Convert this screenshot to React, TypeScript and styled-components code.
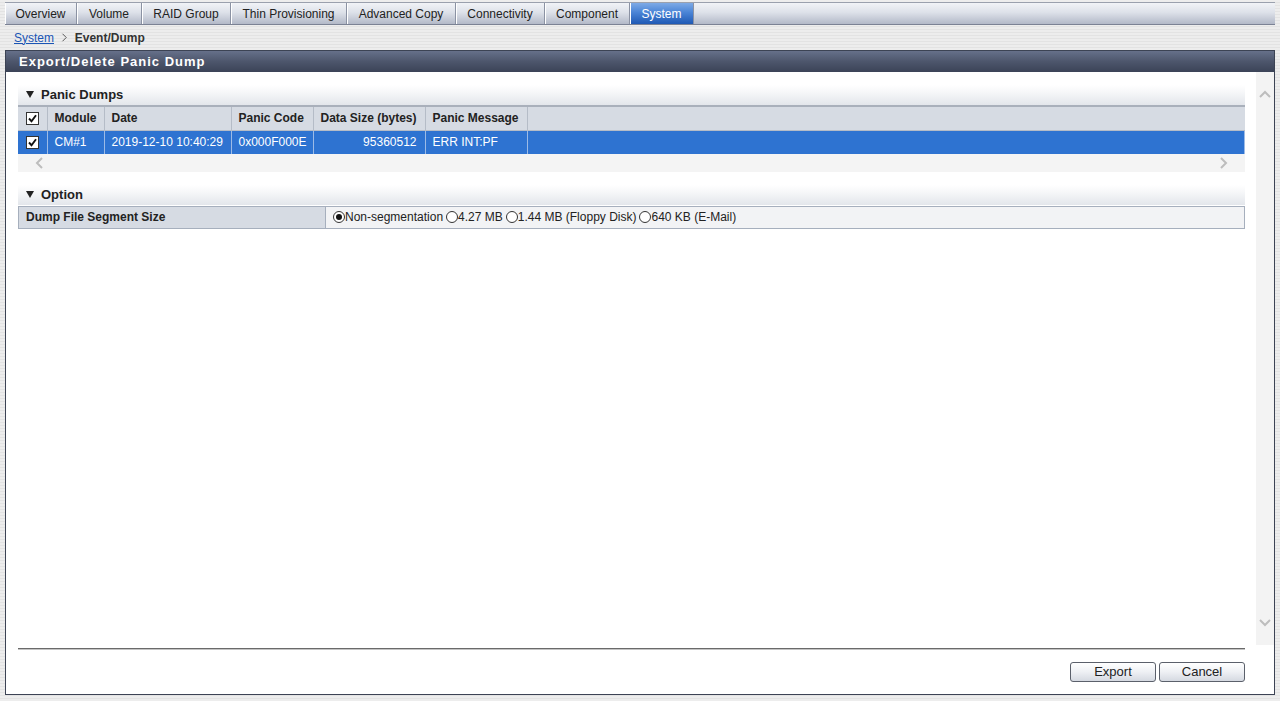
import React from "react";
import styled, { createGlobalStyle } from "styled-components";

const Global = createGlobalStyle`
  html, body { margin: 0; padding: 0; }
  body {
    font-family: "Liberation Sans", Arial, sans-serif;
    font-size: 12px;
    color: #222;
    background: repeating-linear-gradient(#ededed 0 2px, #e3e3e3 2px 3px);
  }
`;

const Page = styled.div`
  height: 701px;
  display: flex;
  flex-direction: column;
  box-sizing: border-box;
  padding: 2px 5px 6px 5px;
`;

const TabBar = styled.div`
  display: flex;
  height: 21px;
  border-top: 1px solid #9aa0ad;
  border-bottom: 1px solid #7b8294;
  background: linear-gradient(#f1f3f7 0%, #dde1e9 45%, #b3b9c8 100%);
`;

const Tab = styled.div<{ $w: number; $active?: boolean }>`
  width: ${(p) => p.$w}px;
  flex: none;
  display: flex;
  align-items: center;
  justify-content: center;
  box-sizing: border-box;
  border-right: 1px solid #8b92a3;
  box-shadow: inset 1px 0 0 #ffffff;
  font-size: 12px;
  color: ${(p) => (p.$active ? "#ffffff" : "#222")};
  background: ${(p) =>
    p.$active ? "linear-gradient(#7eaae6 0%, #4a84d6 45%, #1f59b4 100%)" : "transparent"};
`;

const Crumbs = styled.div`
  height: 25px;
  display: flex;
  align-items: center;
  gap: 7px;
  padding-left: 9px;
  font-size: 12px;
`;

const CrumbLink = styled.a`
  color: #1a55b5;
  text-decoration: underline;
`;

const CrumbSep = styled.span`
  display: flex;
  align-items: center;
`;

const CrumbCurrent = styled.span`
  font-weight: bold;
  color: #333;
`;

const Panel = styled.div`
  flex: 1;
  display: flex;
  flex-direction: column;
  border: 1px solid #3c4354;
  background: #fff;
  min-height: 0;
`;

const PanelHeader = styled.div`
  height: 21px;
  display: flex;
  align-items: center;
  padding-left: 13px;
  background: linear-gradient(#66708a 0%, #4d566c 50%, #3b4357 100%);
  color: #fff;
  font-weight: bold;
  font-size: 13px;
  letter-spacing: 1px;
`;

const ScrollRegion = styled.div`
  height: 573px;
  display: flex;
`;

const ScrollContent = styled.div`
  flex: 1;
  padding: 13px 11px 0 12px;
  display: flex;
  flex-direction: column;
`;

const VScroll = styled.div`
  width: 18px;
  background: #f3f3f3;
  display: flex;
  flex-direction: column;
  justify-content: space-between;
  align-items: center;
  padding: 18px 0 18px;
  box-sizing: border-box;
`;

const SectionHeader = styled.div<{ $mt?: number }>`
  height: 20px;
  box-sizing: border-box;
  padding: 0 0 1px 8px;
  margin-top: ${(p) => p.$mt ?? 0}px;
  display: flex;
  align-items: center;
  gap: 7px;
  font-weight: bold;
  font-size: 13px;
  color: #222;
  background: linear-gradient(#ffffff 0%, #f5f6f8 40%, #e3e6eb 100%);
`;

const Triangle = styled.span`
  width: 0;
  height: 0;
  border-left: 4px solid transparent;
  border-right: 4px solid transparent;
  border-top: 7px solid #222;
`;

const Table = styled.table`
  width: 100%;
  border-collapse: collapse;
  border-top: 2px solid #a9b0bb;
  table-layout: fixed;
`;

const Th = styled.th<{ $w?: number }>`
  ${(p) => (p.$w ? `width: ${p.$w}px;` : "")}
  height: 24px;
  padding: 0 7px;
  box-sizing: border-box;
  background: #d6dbe3;
  text-align: left;
  font-weight: bold;
  font-size: 12px;
  color: #222;
  border-right: 1px solid #b5bcc7;
  border-bottom: 1px solid #b5bcc7;
  &:last-child { border-right: none; }
`;

const Td = styled.td<{ $right?: boolean }>`
  height: 23px;
  padding: 0 7px;
  background: #2e73d1;
  color: #fff;
  font-size: 12px;
  text-align: ${(p) => (p.$right ? "right" : "left")};
  padding-right: ${(p) => (p.$right ? 8 : 7)}px;
  border-right: 1px solid #9dbbe6;
  white-space: nowrap;
`;

const CheckCell = styled.div`
  display: flex;
  align-items: center;
  justify-content: center;
`;

const CheckBox = styled.span`
  width: 11px;
  height: 11px;
  background: #fff;
  border: 1px solid #333;
  display: flex;
  align-items: center;
  justify-content: center;
`;

const HScroll = styled.div`
  height: 18px;
  background: #f4f4f4;
  display: flex;
  align-items: center;
  justify-content: space-between;
  padding: 0 17px;
`;

const OptionRow = styled.div`
  display: flex;
  height: 21px;
  margin-top: 1px;
  border: 1px solid #a6afbd;
`;

const OptionLabel = styled.div`
  width: 307px;
  flex: none;
  display: flex;
  align-items: center;
  padding-left: 7px;
  box-sizing: border-box;
  background: #d6dbe3;
  border-right: 1px solid #a6afbd;
  font-weight: bold;
  font-size: 12px;
  color: #222;
`;

const OptionValue = styled.div`
  flex: 1;
  display: flex;
  align-items: center;
  padding-left: 7px;
  background: #f2f3f5;
  font-size: 12px;
  color: #222;
`;

const RadioItem = styled.label`
  display: flex;
  align-items: center;
  margin-right: 3px;
`;

const Radio = styled.span<{ $on?: boolean }>`
  width: 10px;
  height: 10px;
  border: 1px solid #333;
  border-radius: 50%;
  background: #fff;
  display: flex;
  align-items: center;
  justify-content: center;
  &::after {
    content: "";
    width: 6px;
    height: 6px;
    border-radius: 50%;
    background: ${(p) => (p.$on ? "#111" : "transparent")};
  }
`;

const Separator = styled.div`
  margin: 3px 29px 0 12px;
  height: 1px;
  background: #6a6a6a;
  border-bottom: 1px solid #c4c4c4;
`;

const Footer = styled.div`
  margin: 0 29px 0 12px;
  padding: 12px 0 11px;
  display: flex;
  justify-content: flex-end;
  gap: 3px;
`;

const Button = styled.button`
  width: 86px;
  height: 20px;
  border: 1px solid #5b606b;
  border-radius: 3px;
  background: linear-gradient(#ffffff 0%, #eef0f4 50%, #d5d9e1 100%);
  font-family: "Liberation Sans", Arial, sans-serif;
  font-size: 13px;
  line-height: 16px;
  color: #222;
  padding: 0 0 1px;
`;

const Check = () => (
  <svg width="9" height="9" viewBox="0 0 9 9">
    <path d="M1 4.5 L3.5 7.2 L8 1.2" fill="none" stroke="#111" strokeWidth="1.9" />
  </svg>
);

const Chevron = ({ dir, color = "#bdbdbd", size = 12 }: { dir: "up" | "down" | "left" | "right"; color?: string; size?: number }) => {
  const d = {
    up: "M1 7 L6 2 L11 7",
    down: "M1 2 L6 7 L11 2",
    left: "M7 1 L2 6 L7 11",
    right: "M2 1 L7 6 L2 11",
  }[dir];
  const vertical = dir === "up" || dir === "down";
  const s = size / 12;
  return (
    <svg
      width={(vertical ? 12 : 9) * s}
      height={(vertical ? 9 : 12) * s}
      viewBox={vertical ? "0 0 12 9" : "0 0 9 12"}
    >
      <path d={d} fill="none" stroke={color} strokeWidth={size < 12 ? 1.3 : 2} />
    </svg>
  );
};

const tabs: [string, number][] = [
  ["Overview", 72],
  ["Volume", 65],
  ["RAID Group", 89],
  ["Thin Provisioning", 116],
  ["Advanced Copy", 109],
  ["Connectivity", 89],
  ["Component", 85],
  ["System", 64],
];

export default function App() {
  return (
    <>
      <Global />
      <Page>
        <TabBar>
          {tabs.map(([t, w]) => (
            <Tab key={t} $w={w} $active={t === "System"}>
              {t}
            </Tab>
          ))}
        </TabBar>
        <Crumbs>
          <CrumbLink href="#">System</CrumbLink>
          <CrumbSep>
            <Chevron dir="right" color="#555" size={9} />
          </CrumbSep>
          <CrumbCurrent>Event/Dump</CrumbCurrent>
        </Crumbs>
        <Panel>
          <PanelHeader>Export/Delete Panic Dump</PanelHeader>
          <ScrollRegion>
            <ScrollContent>
              <SectionHeader>
                <Triangle />
                Panic Dumps
              </SectionHeader>
              <Table>
                <thead>
                  <tr>
                    <Th $w={29}>
                      <CheckCell>
                        <CheckBox>
                          <Check />
                        </CheckBox>
                      </CheckCell>
                    </Th>
                    <Th $w={57}>Module</Th>
                    <Th $w={127}>Date</Th>
                    <Th $w={82}>Panic Code</Th>
                    <Th $w={112}>Data Size (bytes)</Th>
                    <Th $w={102}>Panic Message</Th>
                    <Th />
                  </tr>
                </thead>
                <tbody>
                  <tr>
                    <Td>
                      <CheckCell>
                        <CheckBox>
                          <Check />
                        </CheckBox>
                      </CheckCell>
                    </Td>
                    <Td>CM#1</Td>
                    <Td>2019-12-10 10:40:29</Td>
                    <Td>0x000F000E</Td>
                    <Td $right>95360512</Td>
                    <Td>ERR INT:PF</Td>
                    <Td />
                  </tr>
                </tbody>
              </Table>
              <HScroll>
                <Chevron dir="left" />
                <Chevron dir="right" />
              </HScroll>
              <SectionHeader $mt={13}>
                <Triangle />
                Option
              </SectionHeader>
              <OptionRow>
                <OptionLabel>Dump File Segment Size</OptionLabel>
                <OptionValue>
                  <RadioItem>
                    <Radio $on />
                    Non-segmentation
                  </RadioItem>
                  <RadioItem>
                    <Radio />
                    4.27 MB
                  </RadioItem>
                  <RadioItem>
                    <Radio />
                    1.44 MB (Floppy Disk)
                  </RadioItem>
                  <RadioItem>
                    <Radio />
                    640 KB (E-Mail)
                  </RadioItem>
                </OptionValue>
              </OptionRow>
            </ScrollContent>
            <VScroll>
              <Chevron dir="up" />
              <Chevron dir="down" />
            </VScroll>
          </ScrollRegion>
          <Separator />
          <Footer>
            <Button>Export</Button>
            <Button>Cancel</Button>
          </Footer>
        </Panel>
      </Page>
    </>
  );
}
